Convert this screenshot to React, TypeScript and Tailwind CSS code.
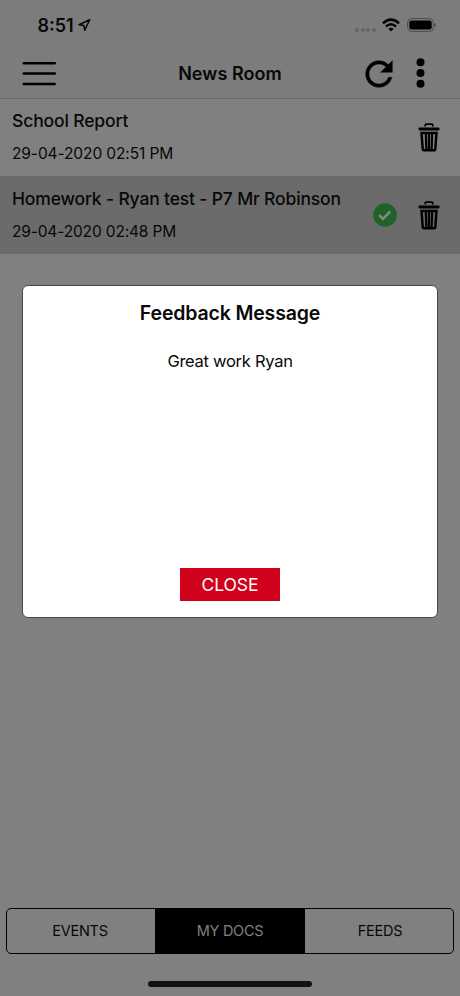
import React from "react";

function StatusBar() {
  return (
    <div className="flex h-[48px] items-start justify-between pl-[37.5px] pr-[23px] pt-[13px]">
      <div className="flex items-start">
        <span className="w-[40px] whitespace-nowrap text-[18px] font-semibold leading-[25px] tracking-[0px]">8:51</span>
        <svg width="14" height="14" viewBox="0 0 14 14" className="mt-[5px]" fill="none" stroke="#080808" strokeWidth="1.5" strokeLinejoin="round">
          <path d="M11.7 1.7 1 6.7l4.9.7.8 4.9z" />
        </svg>
      </div>
      <div className="flex items-start">
        <div className="mr-[6px] mt-[15px] flex gap-[1.6px]">
          {[0, 1, 2, 3].map((i) => (
            <span key={i} className="size-[4px] rounded-full bg-[#656565]" />
          ))}
        </div>
        <svg width="18" height="14" viewBox="0 0 18 14" className="mr-[7px] mt-[5px]" fill="none" stroke="#000" strokeWidth="2.5">
          <path d="M1 5.3Q9-2.1 17 5.3" />
          <path d="M4 8.5q5-4.5 10 0" />
          <path d="M6.4 10.8q2.6-2.3 5.2 0L9 13.4z" fill="#000" stroke="none" />
        </svg>
        <svg width="30" height="14" viewBox="0 0 30 14" className="mt-[5px]">
          <rect x=".6" y=".6" width="25.8" height="12.8" rx="4" fill="none" stroke="#4b4b4b" />
          <rect x="2.3" y="2.4" width="22.4" height="9.2" rx="2.3" />
          <path d="M27.5 5c2 .5 2 3.5 0 4z" fill="#4b4b4b" />
        </svg>
      </div>
    </div>
  );
}

function Header() {
  return (
    <div className="grid h-[50px] grid-cols-[1fr_auto_1fr] items-center">
      <svg width="34" height="25" viewBox="0 0 34 25" className="ml-[22px]" stroke="#000" strokeWidth="2.5" strokeLinecap="round">
        <path d="M1.8 2.3h31M1.8 12.6h31M1.8 22.9h31" />
      </svg>
      <h1 className="whitespace-nowrap pt-[2px] text-[18px] font-semibold leading-[24px] tracking-[0.05px]">News Room</h1>
      <div className="flex items-center justify-end">
        <svg width="40" height="40" viewBox="0 0 24 24" className="mr-[17px] mt-px">
          <path d="M17.65 6.35C16.2 4.9 14.21 4 12 4c-4.42 0-7.99 3.58-7.99 8s3.57 8 7.99 8c3.73 0 6.84-2.55 7.73-6h-2.08c-.82 2.33-3.04 4-5.65 4-3.31 0-6-2.69-6-6s2.69-6 6-6c1.66 0 3.14.69 4.22 1.78L13 11h7V4z" stroke="#000" strokeWidth=".25" />
        </svg>
        <svg width="9" height="30" viewBox="0 0 9 30" className="mr-[35px]">
          <circle cx="4.5" cy="4.2" r="4" />
          <circle cx="4.5" cy="15" r="4" />
          <circle cx="4.5" cy="25.8" r="4" />
        </svg>
      </div>
    </div>
  );
}

function TrashIcon() {
  return (
    <svg width="22" height="29" viewBox="0 0 22 29" fill="none" stroke="#000">
      <path d="M7.2 3.4V2.1Q7.2 1.2 8.2 1.2h5.6q1 0 1 .9v1.3" strokeWidth="1.7" />
      <path d="M1.8 6h18.4" strokeWidth="2.8" strokeLinecap="round" />
      <path d="m3.5 10 1.2 15.8q.1 1.4 1.5 1.4h9.6q1.4 0 1.5-1.4L18.5 10z" strokeWidth="2.5" />
      <path d="m7.8 10 .6 17M11 10v17M14.2 10l-.6 17" strokeWidth="2.2" />
    </svg>
  );
}

function CheckBadge() {
  return (
    <svg width="24" height="24" viewBox="0 0 24 24" className="-mt-px">
      <circle cx="12" cy="12" r="11.8" fill="#1f6328" />
      <path d="m6.3 12.2 3.6 3.6 7.4-7.4" fill="none" stroke="#858585" strokeWidth="2.6" />
    </svg>
  );
}

type RowProps = { title: string; date: string; tone: string; titleTone: string; dateTone: string; done?: boolean };

function DocumentRow({ title, date, tone, titleTone, dateTone, done }: RowProps) {
  return (
    <div className={`flex h-[78px] shrink-0 items-center justify-between pl-[12px] pr-[20px] ${tone}`}>
      <div className="self-start pt-[10px]">
        <div className={`whitespace-nowrap text-[17.5px] font-medium leading-[25px] ${titleTone}`}>{title}</div>
        <div className={`mt-[10px] whitespace-nowrap text-[15.5px] leading-[22px] ${dateTone}`}>{date}</div>
      </div>
      <div className="flex items-center gap-[21.5px]">
        {done && <CheckBadge />}
        <TrashIcon />
      </div>
    </div>
  );
}

function FeedbackDialog() {
  return (
    <section className="mx-[22px] mt-[31px] flex h-[333px] flex-col items-center rounded-[6px] border border-[#484848] bg-white">
      <h2 className="mt-[13px] whitespace-nowrap text-[19.5px] font-semibold leading-[28px] tracking-[-0.16px]">Feedback Message</h2>
      <p className="mt-[22px] whitespace-nowrap text-[16.5px] leading-[24px] tracking-[-0.28px]">Great work Ryan</p>
      <button className="mb-[16px] mt-auto h-[33px] w-[100px] bg-[#d0021b] text-[17.5px] leading-[33px] tracking-[-0.1px] text-white">CLOSE</button>
    </section>
  );
}

function TabBar() {
  return (
    <nav className="mx-[6px] mt-auto grid h-[46px] grid-cols-[148px_150px_1fr] overflow-hidden rounded-[5px] border border-black text-[14.5px] tracking-[-0.25px]">
      <button className="pr-[2px]">EVENTS</button>
      <button className="bg-black text-[#808080]">MY DOCS</button>
      <button className="pl-[2px]">FEEDS</button>
    </nav>
  );
}

export default function App() {
  return (
    <main className="flex h-[996px] w-[460px] flex-col overflow-hidden bg-[#808080] font-['Inter','Liberation_Sans',sans-serif] text-[#080808]">
      <header className="h-[98px] shrink-0 bg-[#7c7c7c]">
        <StatusBar />
        <Header />
      </header>
      <DocumentRow title="School Report" date="29-04-2020 02:51 PM" tone="shadow-[inset_0_1px_0_#686868]" titleTone="tracking-[-0.13px]" dateTone="tracking-[-0.1px]" />
      <DocumentRow title="Homework - Ryan test - P7 Mr Robinson" date="29-04-2020 02:48 PM" tone="bg-[#6b6b6b]" titleTone="tracking-[-0.16px]" dateTone="tracking-[-0.15px]" done />
      <FeedbackDialog />
      <TabBar />
      <div className="mx-auto mb-[9px] mt-[27px] h-[6px] w-[164px] rounded-full bg-[#111]" />
    </main>
  );
}
